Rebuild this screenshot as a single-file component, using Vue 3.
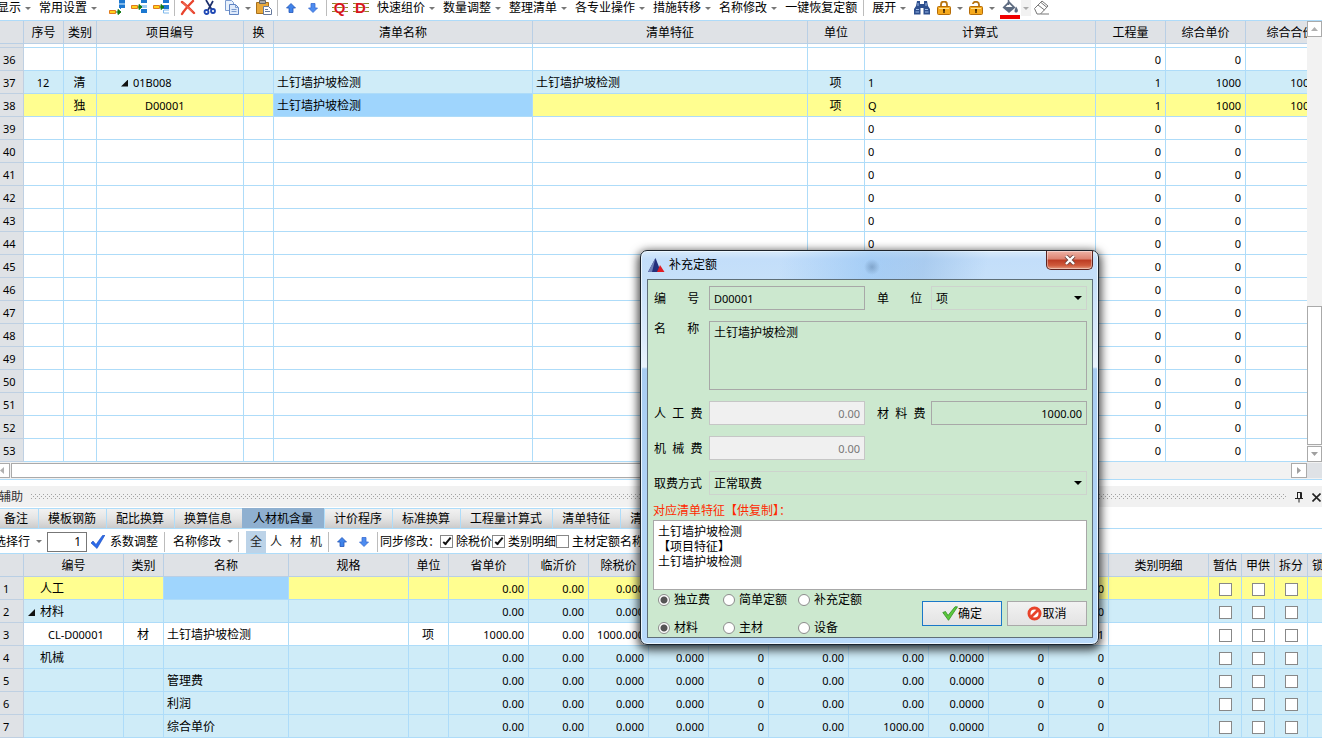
<script setup>
import { ref } from 'vue'

const topCols = [24, 40, 33, 147, 30, 259, 275, 57, 231, 70, 80, 90]
const topHeads = ['', '序号', '类别', '项目编号', '换', '清单名称', '清单特征', '单位', '计算式', '工程量', '综合单价', '综合合价']
const name = '土钉墙护坡检测'

const topRows = [{ no: 36, kind: 'plain', qty: '0', price: '0' }]
topRows.push({ no: 37, kind: 'list', seq: '12', type: '清', code: '01B008', name, feature: name, unit: '项', formula: '1', qty: '1', price: '1000', total: '1000.00' })
topRows.push({ no: 38, kind: 'current', type: '独', code: 'D00001', name, unit: '项', formula: 'Q', qty: '1', price: '1000', total: '1000.00' })
for (let n = 39; n <= 53; n++) topRows.push({ no: n, kind: 'plain', formula: '0', qty: '0', price: '0' })

const tabs = ['备注', '模板钢筋', '配比换算', '换算信息', '人材机含量', '计价程序', '标准换算', '工程量计算式', '清单特征', '清单']
const activeTab = ref('人材机含量')
const scopes = ['全', '人', '材', '机']
const activeScope = ref('全')
const factor = ref('1')
const syncs = ref([
  { label: '除税价', on: true },
  { label: '类别明细', on: true },
  { label: '主材定额名称', on: false }
])

const subCols = [24, 100, 40, 125, 120, 40, 80, 60, 60, 60, 60, 80, 80, 60, 60, 60, 100, 33, 33, 33, 33]
const subHeads = ['', '编号', '类别', '名称', '规格', '单位', '省单价', '临沂价', '除税价', '', '', '', '', '', '', '', '类别明细', '暂估', '甲供', '拆分', '锁定']
const zeros = ['0.00', '0.00', '0.000', '0.000', '0', '0.00', '0.00', '0.0000', '0', '0']
const subRows = [
  { no: 1, kind: 'current', code: '人工', nums: zeros },
  { no: 2, kind: 'list', code: '材料', open: true, nums: zeros },
  { no: 3, kind: 'plain', code: 'CL-D00001', leaf: true, type: '材', name, unit: '项', nums: ['1000.00', '0.00', '1000.000', '0.000', '0', '0.00', '0.00', '0.0000', '0', '1'] },
  { no: 4, kind: 'list', code: '机械', nums: zeros },
  { no: 5, kind: 'list', name: '管理费', nums: zeros },
  { no: 6, kind: 'list', name: '利润', nums: zeros },
  { no: 7, kind: 'list', name: '综合单价', nums: ['0.00', '0.00', '0.000', '0.000', '0', '0.00', '1000.00', '0.0000', '0', '0'] }
]
const flags = ['暂估', '甲供', '拆分']

const menus = ['快速组价', '数量调整', '整理清单', '各专业操作', '措施转移', '名称修改']
const form = ref({
  code: 'D00001', unit: '项', name, labor: '0.00', material: '1000.00', machine: '0.00', mode: '正常取费',
  copy: name + '\n【项目特征】\n' + name, kind: '独立费', sort: '材料'
})
const kinds = ['独立费', '简单定额', '补充定额']
const sorts = ['材料', '主材', '设备']
</script>

<template>
  <div class="app">
    <div class="toolbar main-bar">
      <button class="txt">显示</button><button class="drop" aria-label="显示选项"></button>
      <button class="txt">常用设置</button><button class="drop" aria-label="设置选项"></button>
      <button class="ico first" aria-label="插入清单">
        <svg width="16" height="16" viewBox="0 0 16 16"><path d="M10 0h6v3h-6zM10 5h6v3h-6z" fill="#1c78d0" /><path d="M10 3h6v2h-6z" fill="#7fb8ea" /><path d="M.5 10.500h6v3h-6z" fill="#ffd21c" stroke="#e07a1c" /><path d="M7 12h4M9 9.500l3 2.500-3 2.500z" stroke="#137a13" fill="#137a13" /><path d="M11.500 5v4" stroke="#1c78d0" /></svg>
      </button>
      <button class="ico" aria-label="插入子目">
        <svg width="16" height="16" viewBox="0 0 16 16"><path d="M10 0h6v3h-6zM10 9h6v4h-6z" fill="#1c78d0" /><path d="M10 5h6v3h-6z" fill="#9ccbf2" /><path d="M.5 5.500h6v3h-6z" fill="#ffd21c" stroke="#e07a1c" /><path d="M7 7h3M8 4.500L11 7 8 9.500z" stroke="#137a13" fill="#137a13" /></svg>
      </button>
      <button class="ico" aria-label="插入补充">
        <svg width="16" height="16" viewBox="0 0 16 16"><path d="M10 0h6v3h-6zM10 5h6v4h-6z" fill="#1c78d0" /><path d="M10.500 10v3H16M16 10h-5" stroke="#7db8ec" fill="none" /><path d="M.5 5.500h6v3h-6z" fill="#ffd21c" stroke="#e07a1c" /><path d="M7 7h3M8 4.500L11 7 8 9.500z" stroke="#137a13" fill="#137a13" /></svg>
      </button>
      <i class="sep"></i>
      <button class="ico" aria-label="删除">
        <svg width="16" height="16" viewBox="0 0 16 16"><path d="M2 2c4 3 8 7 12 11M13 1C9 5 5 9 2 14" stroke="#e8432c" stroke-width="2.400" fill="none" stroke-linecap="round" /><path d="M3 2.500l9 9" stroke="#f79a86" stroke-width=".7" /></svg>
      </button>
      <button class="ico" aria-label="剪切">
        <svg width="16" height="16" viewBox="0 0 16 16"><path d="M4 0l6 10M11 1L6 10" stroke="#1c2f6c" stroke-width="1.700" fill="none" /><circle cx="4.500" cy="12" r="2" fill="none" stroke="#1f48b4" stroke-width="1.800" /><circle cx="11" cy="11" r="2" fill="none" stroke="#1f48b4" stroke-width="1.800" /></svg>
      </button>
      <button class="ico" aria-label="复制">
        <svg width="16" height="16" viewBox="0 0 16 16"><path d="M1.500.500h6l2 2v8h-8z" fill="#e8f1fc" stroke="#7c9cd0" /><path d="M5.500 4.500h6l3 3v7h-9z" fill="#dfeafa" stroke="#5f83c2" /><path d="M11.500 4.500v3h3M7.500 9.500h5M7.500 11.500h5" fill="none" stroke="#7c9cd0" /></svg>
      </button>
      <button class="drop" aria-label="复制选项"></button>
      <button class="ico" aria-label="粘贴">
        <svg width="16" height="16" viewBox="0 0 16 16"><path d="M.5 2.500h12v11H.5z" fill="#e9a93c" stroke="#a8701c" /><path d="M3.500.500h6v3h-6z" fill="#a9a9a9" stroke="#666" /><path d="M7.500 6.500h5l3 3v5h-8z" fill="#fff" stroke="#66799c" /><path d="M9 9.500h3M9 11.500h5" stroke="#66799c" /></svg>
      </button>
      <i class="sep"></i>
      <button class="ico" aria-label="上移"><svg width="10" height="10" viewBox="0 0 10 10"><path d="M5 .5l4.500 4.500H7v4.500H3V5H.5z" fill="#3f83ea" stroke="#2456b8" stroke-width=".8" /></svg></button>
      <button class="ico" aria-label="下移"><svg width="10" height="10" viewBox="0 0 10 10"><path d="M5 9.500L9.500 5H7V.5H3V5H.5z" fill="#4d8cf0" stroke="#3a6cd0" stroke-width=".8" /></svg></button>
      <i class="sep"></i>
      <button class="ico narrow letter">Q</button>
      <button class="ico narrow letter">D</button>
      <template v-for="m in menus" :key="m">
        <button class="txt">{{ m }}</button><button class="drop" :aria-label="m + '选项'"></button>
      </template>
      <button class="txt">一键恢复定额</button>
      <i class="sep"></i>
      <button class="txt">展开</button><button class="drop" aria-label="展开选项"></button>
      <button class="ico wide" aria-label="查找">
        <svg width="16" height="14" viewBox="0 0 16 14"><path d="M3 0h3v3h4V0h3l1 5 2 3v5.500H9.500V7h-3v6.500H0V8l2-3z" fill="#2d4f8e" /><path d="M2 8.500h3M11 8.500h3M1.500 11h3.500M11 11h3.500M4 2v3M12 2v3" stroke="#9cb9e6" /></svg>
      </button>
      <button class="ico" aria-label="锁定">
        <svg width="14" height="14" viewBox="0 0 14 14"><path d="M4 7V3.500a3 3 0 016 0V7" fill="none" stroke="#b87410" stroke-width="1.800" /><rect x=".5" y="5.500" width="13" height="8" rx="1" fill="#f5a91d" stroke="#b56c08" /><path d="M2 7.500h10" stroke="#ffdf8c" /><path d="M7 8v4M6 9h2" stroke="#4a2b00" stroke-width="1.500" /></svg>
      </button>
      <button class="drop" aria-label="锁定选项"></button>
      <button class="ico" aria-label="解锁">
        <svg width="14" height="14" viewBox="0 0 14 14"><path d="M4 3V2.500C5 0 10 0 10 3.500V7" fill="none" stroke="#b87410" stroke-width="1.800" /><rect x=".5" y="5.500" width="13" height="8" rx="1" fill="#f5a91d" stroke="#b56c08" /><path d="M2 7.500h10" stroke="#ffdf8c" /><path d="M7 8v4M6 9h2" stroke="#4a2b00" stroke-width="1.500" /></svg>
      </button>
      <button class="drop" aria-label="解锁选项"></button>
      <button class="ico fill" aria-label="填充颜色">
        <svg width="20" height="20" viewBox="0 0 20 20"><path d="M2.500 7.500L9 1l6.500 6.500L9 13z" fill="#5d6b80" /><path d="M5.500 7L9 3.500 12.500 7z" fill="#fff" /><path d="M8.500 0v5" stroke="#5d6b80" stroke-width="1.500" /><path d="M16 6.500c3 4 2 6 0 6s-2-2 0-6z" fill="#5d6b80" /><path d="M0 15h20v4H0z" fill="#f00000" /></svg>
      </button>
      <button class="drop pale" aria-label="颜色选项"></button>
      <button class="ico" aria-label="清除颜色">
        <svg width="18" height="16" viewBox="0 0 18 16"><path d="M1.500 8.500L9 1l6 5-7.500 8H4zM5 5l6.500 5M8 2.500l6 5M7.500 14H16" fill="#fff" stroke="#777" /></svg>
      </button>
    </div>

    <section class="top-area">
      <div class="top-grid">
        <table class="grid top-table">
          <colgroup><col v-for="(w, i) in topCols" :key="i" :style="{ width: w + 'px' }"></colgroup>
          <thead>
            <tr><th v-for="(h, i) in topHeads" :key="i" scope="col">{{ h }}</th></tr>
          </thead>
          <tbody>
            <tr class="sliver"><td v-for="(w, i) in topCols" :key="i" :class="{ no: i === 0 }"></td></tr>
            <tr v-for="r in topRows" :key="r.no" :class="r.kind">
              <td class="no num">{{ r.no }}</td>
              <td class="mid num">{{ r.seq }}</td>
              <td class="mid">{{ r.type }}</td>
              <td class="num" :class="r.kind === 'list' ? 'code' : 'child'"><i v-if="r.kind === 'list'" class="tri"></i>{{ r.code }}</td>
              <td></td>
              <td :class="{ picked: r.kind === 'current' }">{{ r.name }}</td>
              <td>{{ r.feature }}</td>
              <td class="mid">{{ r.unit }}</td>
              <td class="num">{{ r.formula }}</td>
              <td class="num right">{{ r.qty }}</td>
              <td class="num right">{{ r.price }}</td>
              <td class="num right">{{ r.total }}</td>
            </tr>
          </tbody>
        </table>
      </div>
      <div class="vbar">
        <button class="sbtn" aria-label="向上滚动"><svg width="7" height="4" viewBox="0 0 7 4"><path d="M0 4l3.500-4L7 4z" fill="#b0b0b0" /></svg></button>
        <div class="vtrack"><div class="vthumb"></div></div>
        <button class="sbtn" aria-label="向下滚动"><svg width="7" height="4" viewBox="0 0 7 4"><path d="M0 0l3.500 4L7 0z" fill="#a0a0a0" /></svg></button>
      </div>
    </section>
    <div class="hbar">
      <button class="hbtn left" aria-label="向左滚动"><svg width="4" height="7" viewBox="0 0 4 7"><path d="M4 0L0 3.500 4 7z" fill="#b0b0b0" /></svg></button>
      <div class="htrack"><div class="hthumb"></div></div>
      <button class="hbtn" aria-label="向右滚动"><svg width="4" height="7" viewBox="0 0 4 7"><path d="M0 0l4 3.500L0 7z" fill="#a0a0a0" /></svg></button>
      <div class="corner"></div>
    </div>

    <header class="aux-head">
      <span class="aux-title">辅助</span>
      <svg class="dots" width="100%" height="6"><defs><pattern id="grip" width="4" height="4" patternUnits="userSpaceOnUse"><path d="M0 0h1v1H0zM2 2h1v1H2z" fill="#a2a2a2" /></pattern></defs><rect width="100%" height="6" fill="url(#grip)" /></svg>
      <button aria-label="固定"><svg width="9" height="12" viewBox="0 0 9 12"><path d="M2.500 1v6M2 1.500h4.500V7M5.500 1v6M0 7.500h8M4 8v3.500" fill="none" stroke="#222" /></svg></button>
      <button aria-label="关闭面板"><svg width="9" height="9" viewBox="0 0 9 9"><path d="M.5.500l8 8M8.500.500l-8 8" stroke="#222" stroke-width="1.600" /></svg></button>
    </header>

    <nav class="tabs">
      <button v-for="t in tabs" :key="t" :class="{ on: t === activeTab }" @click="activeTab = t">{{ t }}</button>
    </nav>

    <div class="toolbar sub-bar">
      <button class="txt">选择行</button><button class="drop" aria-label="选择行选项"></button>
      <input v-model="factor" class="factor" aria-label="系数">
      <button class="txt adjust"><svg width="14" height="14" viewBox="0 0 14 14"><path d="M0 8l2-2 3 3.500L11.500.500 14 0 6 13.500z" fill="#2c6bec" stroke="#1a49b8" stroke-width=".6" /></svg>系数调整</button>
      <i class="sep"></i>
      <button class="txt">名称修改</button><button class="drop" aria-label="名称修改选项"></button>
      <i class="sep gap"></i>
      <div class="scopes"><button v-for="s in scopes" :key="s" :class="{ on: s === activeScope }" @click="activeScope = s">{{ s }}</button></div>
      <i class="sep"></i>
      <button class="ico" aria-label="行上移"><svg width="10" height="10" viewBox="0 0 10 10"><path d="M5 .5l4.500 4.500H7v4.500H3V5H.5z" fill="#3f83ea" stroke="#2456b8" stroke-width=".8" /></svg></button>
      <button class="ico" aria-label="行下移"><svg width="10" height="10" viewBox="0 0 10 10"><path d="M5 9.500L9.500 5H7V.5H3V5H.5z" fill="#4d8cf0" stroke="#3a6cd0" stroke-width=".8" /></svg></button>
      <i class="sep"></i>
      <span class="sync">同步修改：</span>
      <label v-for="s in syncs" :key="s.label" class="check"><input v-model="s.on" type="checkbox">{{ s.label }}</label>
    </div>

    <section class="sub-grid">
      <table class="grid sub-table">
        <colgroup><col v-for="(w, i) in subCols" :key="i" :style="{ width: w + 'px' }"></colgroup>
        <thead>
          <tr><th v-for="(h, i) in subHeads" :key="i" scope="col">{{ h }}</th></tr>
        </thead>
        <tbody>
          <tr v-for="r in subRows" :key="r.no" :class="r.kind">
            <td class="no num">{{ r.no }}</td>
            <td :class="r.leaf ? 'leaf num' : 'branch'"><i v-if="r.open" class="tri"></i>{{ r.code }}</td>
            <td class="mid">{{ r.type }}</td>
            <td :class="{ picked: r.kind === 'current' }">{{ r.name }}</td>
            <td></td>
            <td class="mid">{{ r.unit }}</td>
            <td v-for="(v, i) in r.nums" :key="i" class="num right">{{ v }}</td>
            <td></td>
            <td v-for="f in flags" :key="f" class="box num"><input type="checkbox" :aria-label="f"></td>
            <td></td>
          </tr>
        </tbody>
      </table>
    </section>

    <div class="dialog" role="dialog" aria-labelledby="dlg-title">
      <div class="titlebar">
        <svg width="17" height="14" viewBox="0 0 17 14"><path d="M7.500 0l5.500 14H0z" fill="#23307c" /><path d="M7.500 0L4 14H0z" fill="#6f80b8" /><path d="M12 7l4.500 7H9z" fill="#e01c24" /></svg>
        <span id="dlg-title">补充定额</span>
        <button class="close" aria-label="关闭"><svg width="12" height="10" viewBox="0 0 12 10"><path d="M2 1l8 8M10 1L2 9" stroke="#6d4540" stroke-width="4" /><path d="M2 1l8 8M10 1L2 9" stroke="#fff" stroke-width="2.400" /></svg></button>
      </div>
      <form class="panel" @submit.prevent>
        <div class="fields">
          <label for="f-code">编　&nbsp;&nbsp;&nbsp;号</label>
          <input id="f-code" v-model="form.code" class="num">
          <label for="f-unit" class="second">单　&nbsp;&nbsp;&nbsp;位</label>
          <div class="select"><select id="f-unit" v-model="form.unit"><option>项</option></select></div>
          <label for="f-name" class="topmost">名　&nbsp;&nbsp;&nbsp;称</label>
          <textarea id="f-name" v-model="form.name" class="span"></textarea>
          <label for="f-labor">人&nbsp;&nbsp;工&nbsp;&nbsp;费</label>
          <input id="f-labor" v-model="form.labor" class="num right" disabled>
          <label for="f-mat" class="second">材&nbsp;&nbsp;料&nbsp;&nbsp;费</label>
          <input id="f-mat" v-model="form.material" class="num right">
          <label for="f-mach">机&nbsp;&nbsp;械&nbsp;&nbsp;费</label>
          <input id="f-mach" v-model="form.machine" class="num right" disabled>
          <label for="f-mode" class="newline">取费方式</label>
          <div class="select span"><select id="f-mode" v-model="form.mode"><option>正常取费</option></select></div>
        </div>
        <label for="f-copy" class="red">对应清单特征【供复制】：</label>
        <textarea id="f-copy" v-model="form.copy" class="copy"></textarea>
        <div class="foot">
          <div class="radios">
            <label v-for="k in kinds" :key="k"><input v-model="form.kind" type="radio" name="kind" :value="k">{{ k }}</label>
            <label v-for="s in sorts" :key="s"><input v-model="form.sort" type="radio" name="sort" :value="s">{{ s }}</label>
          </div>
          <button class="act ok"><svg width="16" height="15" viewBox="0 0 16 15"><path d="M.8 6.500l2.700-1 2.500 4L13 .8h2.500L6.500 14.300z" fill="#5cc83c" stroke="#2f8f22" stroke-width=".8" /></svg>确定</button>
          <button class="act" type="button"><svg width="15" height="15" viewBox="0 0 15 15"><circle cx="7.500" cy="7.500" r="5.500" fill="#fff" stroke="#e8432a" stroke-width="3" /><path d="M3.500 11.500l8-8" stroke="#e8432a" stroke-width="2.600" /></svg>取消</button>
        </div>
      </form>
    </div>
  </div>
</template>

<style>
body { margin: 0; background: #fff; }
</style>

<style scoped>
.app { position: relative; overflow: hidden; min-height: 100vh; font: 12px/16px "Noto Sans", "Noto Sans CJK SC", sans-serif; color: #000; background: #fff; }
.app * { box-sizing: border-box; }
button, input, select, textarea { font: inherit; color: inherit; margin: 0; padding: 0; border: 0; background: none; border-radius: 0; outline: 0; }
button { white-space: nowrap; flex: none; }
svg { display: block; flex: none; }

.toolbar { display: flex; align-items: center; overflow: hidden; }
.main-bar { height: 21px; padding-bottom: 4px; border-bottom: 1px solid #aedbf9; margin-left: -9px; }
.main-bar > * { height: 16px; }
.txt { padding: 0 2px 0 6px; }
.ico { width: 22px; display: flex; align-items: center; justify-content: center; }
.ico.first { margin-left: 7px; }
.ico.wide { margin-left: 3px; }
.ico.narrow { width: 21px; }
.ico.fill { align-self: flex-start; height: 20px; margin-left: 2px; }
.letter { font: 700 15px/16px "Liberation Sans", sans-serif; color: #d8141c; text-shadow: 0 0 1px #fff; background: linear-gradient(#8c8428, #8c8428) center 3px / 16px 1px no-repeat, linear-gradient(#8c8428, #8c8428) center 7px / 16px 1px no-repeat, linear-gradient(#8c8428, #8c8428) center 11px / 16px 1px no-repeat; }
.drop { width: 10px; height: 16px; display: flex; align-items: center; justify-content: center; }
.drop::after { content: ""; border: solid transparent; border-width: 3px 3px 0; border-top-color: #777; }
.drop.pale { background: #f2f2f2; }
.drop.pale::after { border-top-color: #aaa; }
.sep { width: 1px; margin: 0 2px; background: #bcbcbc; flex: none; }
.txt + .sep { margin-left: 4px; }

.top-area { display: flex; }
.top-grid { flex: 1; min-width: 0; overflow: hidden; }
.grid { border-collapse: separate; border-spacing: 0; table-layout: fixed; min-width: 100%; }
.top-table { width: 1336px; }
.sub-table { width: 1341px; }
.grid th { height: 23px; padding: 2px 0 0; font-weight: 400; background: #dfe2e6; border-right: 1px solid #b9cfe5; border-bottom: 1px solid #b9cfe5; white-space: nowrap; }
.grid td { height: 23px; padding: 2px 4px 0 3px; border-right: 1px solid #aedcf9; border-bottom: 1px solid #aedcf9; white-space: nowrap; line-height: 16px; }
.grid td.num { padding-top: 1px; }
.grid td.no { background: #dfe2e6; border-color: #bfd0e2; }
.grid .sliver td { height: 4px; padding: 0; }
.grid .mid { text-align: center; }
.grid .right { text-align: right; }
.num { font-size: 11px; }
.list td { background: #cfecf8; }
.current td { background: #fffe90; }
.grid td.picked { background: #9fd5fd; }
.grid td.code { padding-left: 24px; }
.grid td.child { padding-left: 48px; }
.grid td.branch { padding-left: 16px; }
.grid td.leaf { padding-left: 24px; }
.tri { display: inline-block; width: 7px; height: 7px; margin-right: 5px; background: #111; clip-path: polygon(100% 0, 100% 100%, 0 100%); }
.branch .tri { margin-left: -12px; }
.grid td.box { text-align: center; padding: 0; }
input[type="checkbox"] { appearance: none; width: 13px; height: 13px; border: 1px solid #888; background: #fff; display: inline-block; vertical-align: middle; flex: none; position: relative; }
input[type="checkbox"]:checked::after { content: ""; position: absolute; left: 4px; top: 0; width: 4px; height: 9px; border: solid #111; border-width: 0 2px 2px 0; box-sizing: border-box; transform: rotate(40deg); }

.vbar { width: 15px; display: flex; flex-direction: column; background: #f2f2f2; }
.sbtn { height: 16px; border: 1px solid #aaa; background: #fff; display: flex; align-items: center; justify-content: center; }
.vtrack { flex: 1; display: flex; flex-direction: column; justify-content: flex-end; padding-bottom: 1px; }
.vthumb { height: 34%; border: 1px solid #aaa; background: #fff; }
.hbar { display: flex; height: 18px; padding: 1px 0; border-bottom: 1px solid #aedcf9; background: #f2f2f2; }
.hbtn { width: 16px; border: 1px solid #aaa; background: #fff; display: flex; align-items: center; justify-content: center; }
.hbtn.left { margin-left: -6px; }
.htrack { flex: 1; padding-left: 1px; }
.hthumb { height: 100%; width: 70%; border: 1px solid #aaa; background: #fff; }
.corner { width: 15px; background: #dfe2e6; }

.aux-head { display: flex; align-items: center; gap: 8px; height: 21px; margin-top: 6px; padding: 1px 1px 0 0; background: #f1f1f1; color: #333; }
.aux-title { margin-left: -1px; flex: none; }
.dots { flex: 1; min-width: 0; }
.tabs { display: flex; height: 22px; padding-top: 1px; border-bottom: 1px solid #aedcf9; margin-left: -6px; overflow: hidden; }
.tabs button { height: 20px; padding: 1px 10px 0 9px; border-left: 1px solid #aedcf9; border-top: 1px solid #aedcf9; background: linear-gradient(#f2f2f2, #e4e4e4 50%, #cbcbcb); }
.tabs button.on { padding: 1px 11px 0 10px; background: #8fb0d0; border-color: #8fb0d0; }

.sub-bar { height: 25px; padding-top: 1px; border-bottom: 1px solid #aedcf9; margin-left: -12px; }
.sub-bar > .drop { margin-left: 2px; }
.sub-bar .sep { height: 20px; }
.sub-bar .gap { margin: 0 7px 0 3px; }
.factor { width: 40px; height: 20px; margin-left: 3px; padding: 0 5px; border: 1px solid #777; text-align: right; flex: none; }
.adjust { display: flex; align-items: center; gap: 5px; padding-left: 4px; }
.scopes { display: flex; }
.scopes button { width: 20px; height: 22px; color: #222; }
.scopes button.on { background: #bcd3e8; }
.sync { white-space: nowrap; flex: none; }
.check { display: flex; align-items: center; gap: 3px; white-space: nowrap; flex: none; }
.sub-grid { overflow: hidden; }

.dialog { position: absolute; top: 250px; right: 223px; width: 459px; padding: 0 5px 6px 6px; border: 1px solid #1d242c; border-radius: 7px; background: linear-gradient(#d9ebfb 0, #c3defa 8px, #c6e0f9 29px, #dcebfb 90px, #eaf3fc 116px, #a8cdf2 118px, #b9dafa 100%); box-shadow: inset 0 0 0 1px #eaf6ff, 0 3px 10px 2px rgba(0, 0, 0, .75); }
.titlebar { display: flex; align-items: center; height: 28px; gap: 4px; padding-left: 1px; background: radial-gradient(circle at 225px 16px, rgba(60, 90, 125, .35), transparent 8px), linear-gradient(100deg, transparent 30%, rgba(120, 180, 240, .4) 50%, rgba(110, 160, 215, .3) 62%, transparent 76%); }
.close { align-self: flex-start; margin-left: auto; width: 47px; height: 19px; display: flex; align-items: center; justify-content: center; border: 1px solid #5c2420; border-top: 0; border-radius: 0 0 5px 5px; background: linear-gradient(#efb3a6, #dc8270 45%, #bc3a22 50%, #cf5a3c 80%, #e59a80); box-shadow: inset 0 0 0 1px rgba(255, 255, 255, .4); }
.panel { padding: 6px 5px 0; border: 1px solid #5f6f78; background: #cce8cf; }
.fields { display: grid; grid-template-columns: 56px 1fr 66px 1fr; row-gap: 11px; align-items: center; }
.fields label { padding: 2px 0 0 1px; white-space: nowrap; }
.fields label.second { padding-left: 12px; }
.fields label.topmost { align-self: start; padding-top: 0; }
.fields label.newline { grid-column: 1; }
.fields input { width: 100%; height: 24px; padding: 0 4px; border: 1px solid #a8a8a8; }
.fields input.right { text-align: right; }
.fields input:disabled { background: #f0f0f0; border-color: #c6c6c6; color: #777; }
.span { grid-column: 2 / 5; }
.panel textarea { display: block; width: 100%; height: 69px; padding: 3px 4px; border: 1px solid #a8a8a8; line-height: 15px; resize: none; overflow: hidden; }
.select { position: relative; height: 24px; }
.select select { appearance: none; width: 100%; height: 24px; padding: 1px 4px 0; border: 1px solid #cdd3cd; }
.select::after { content: ""; position: absolute; right: 5px; top: 10px; border: solid transparent; border-width: 4px 4px 0; border-top-color: #000; pointer-events: none; }
.red { display: block; margin-top: 7px; line-height: 18px; color: #ff2a00; }
.panel textarea.copy { height: 70px; background: #fff; }
.foot { display: flex; gap: 5px; }
.radios { flex: 1; display: grid; grid-template-columns: 65px 75px 1fr; row-gap: 10px; padding: 1px 0 0 5px; }
.radios label { display: flex; align-items: center; gap: 4px; line-height: 18px; white-space: nowrap; }
.radios input { appearance: none; width: 12px; height: 12px; border: 1px solid #8c8c8c; border-radius: 50%; background: #fff; }
.radios input:checked { background: radial-gradient(circle, #555 3px, #fff 4px); }
.act { display: flex; align-items: center; justify-content: center; width: 80px; height: 25px; margin-top: 11px; border: 1px solid #a9a9a9; background: linear-gradient(#f2f2f2, #e3e3e3); }
.act.ok { border-color: #1a78c8; }
</style>
